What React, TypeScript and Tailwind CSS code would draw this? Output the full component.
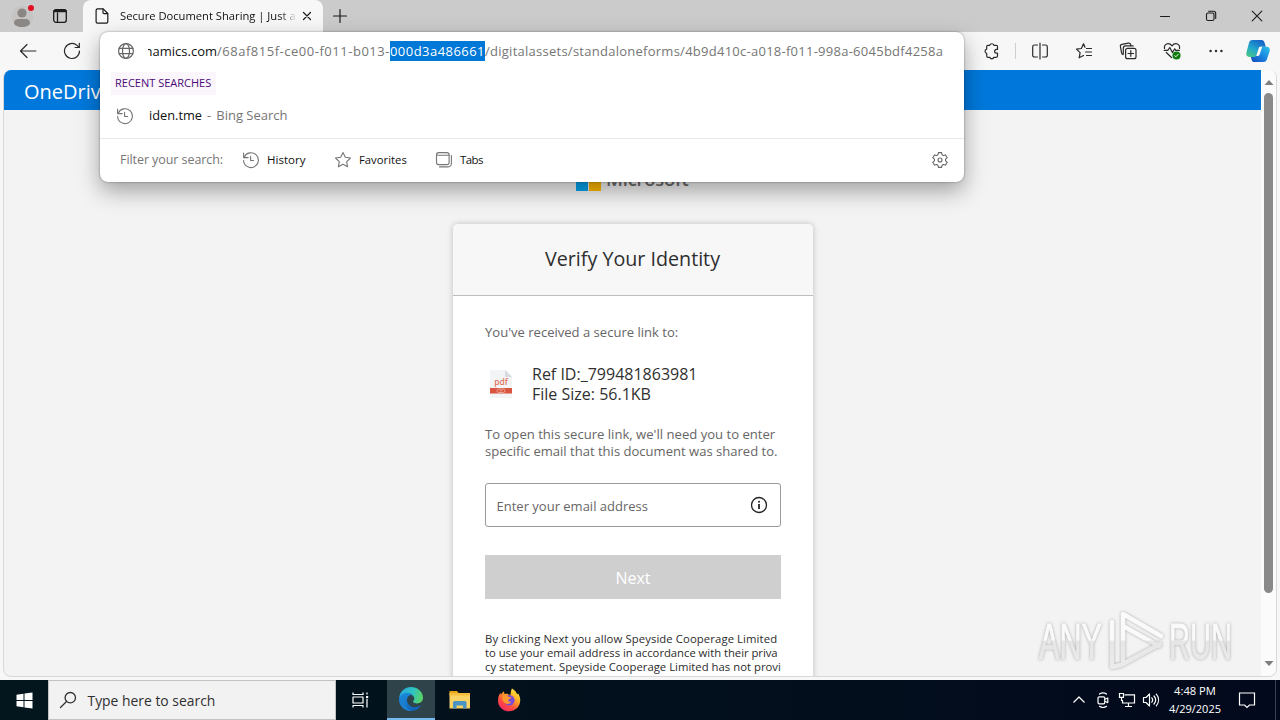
import type { ReactNode } from "react";

type IconProps = { size?: number; className?: string; children: ReactNode; sw?: number; box?: number };

function Icon({ size = 20, className = "", children, sw = 1.1, box }: IconProps) {
  const b = box ?? size;
  return (
    <svg
      width={size}
      height={size}
      viewBox={`0 0 ${b} ${b}`}
      fill="none"
      stroke="currentColor"
      strokeWidth={sw}
      strokeLinecap="round"
      strokeLinejoin="round"
      className={`shrink-0 ${className}`}
    >
      {children}
    </svg>
  );
}

const HistoryIcon = () => (
  <Icon size={18} className="text-[#767676]">
    <path d="M2.2 6.2A7.4 7.4 0 1 1 1.6 9.4" />
    <path d="M1.6 2v4.6h4.6" />
    <path d="M8.6 5.3v4.2h3" />
  </Icon>
);

function TabBar() {
  return (
    <div className="flex h-8 shrink-0 items-center bg-[#cbcbcb] text-[#1b1b1b]">
      <div className="flex w-[83px] items-center pl-[11px]">
        <svg width="24" height="24" viewBox="0 0 24 24" className="shrink-0">
          <circle cx="11.5" cy="12.5" r="11" fill="#c6c5c4" />
          <circle cx="11" cy="9" r="4.600" fill="#8b8784" />
          <path d="M3 19c0-2.600 2-4 4.200-4h7.600c2.200 0 4.200 1.400 4.200 4 0 2-3.500 4-8 4s-8-2-8-4z" fill="#8b8784" />
          <circle cx="20" cy="4" r="3" fill="#e01020" />
        </svg>
        <Icon size={16} className="ml-[17px]" sw={1.3}>
          <rect x="1.700" y="1.700" width="12.600" height="12.600" rx="2.200" />
          <path d="M2.500 3h11" strokeWidth="2.400" />
          <path d="M5.500 5v9" />
        </Icon>
      </div>
      <div className="flex h-8 w-60 items-center rounded-t-lg bg-[#f7f7f7]">
        <Icon size={18} className="ml-[10px]" sw={1.2}>
          <path d="M4.500 1.800h5.700l4.600 4.700v8.300a1.400 1.400 0 0 1-1.400 1.400H4.500a1.400 1.400 0 0 1-1.400-1.400V3.200a1.400 1.400 0 0 1 1.400-1.400z" />
          <path d="M10 2v3.600a1.100 1.100 0 0 0 1.100 1.100h3.500" />
        </Icon>
        <div className="ml-[9px] w-[177px] overflow-hidden whitespace-nowrap bg-linear-to-r from-[#111] from-90% to-[#f7f7f7] to-100% bg-clip-text text-[11.2px] leading-4 text-transparent">
          Secure Document Sharing | Just a
        </div>
        <Icon size={12} className="ml-[4px]" sw={1.2}>
          <path d="M2.500 2.500l7 7M9.500 2.500l-7 7" />
        </Icon>
      </div>
      <Icon size={16} className="ml-[9px]" sw={1.2}>
        <path d="M8 1.500v13M1.500 8h13" />
      </Icon>
      <div className="ml-auto flex items-center">
        <Icon size={12} sw={1} className="mr-[34px]">
          <path d="M1.500 6.500h9" />
        </Icon>
        <Icon size={12} sw={1.1} className="mr-[34px]">
          <rect x="1.500" y="3" width="7.500" height="7.500" rx="1.500" />
          <path d="M3.600 1.300h4.900a2.200 2.200 0 0 1 2.200 2.200v4.900" />
        </Icon>
        <Icon size={12} sw={1.1} className="mr-[17px]">
          <path d="M1.200 1.200l9.600 9.600M10.800 1.200l-9.600 9.600" />
        </Icon>
      </div>
    </div>
  );
}

function CopilotIcon() {
  return (
    <svg width="26" height="26" viewBox="0 0 26 26" className="shrink-0">
      <defs>
        <linearGradient id="cpA" x1="0" y1="1" x2="0.600" y2="0">
          <stop offset="0" stopColor="#4fc97a" />
          <stop offset="0.500" stopColor="#23a9cc" />
          <stop offset="1" stopColor="#1767c9" />
        </linearGradient>
        <linearGradient id="cpB" x1="1" y1="0" x2="0" y2="1">
          <stop offset="0" stopColor="#2bc3e8" />
          <stop offset="0.500" stopColor="#1b86e0" />
          <stop offset="1" stopColor="#1546b8" />
        </linearGradient>
      </defs>
      <path d="M18.500 24H9.300c-1.600 0-2.300-1-2.800-2.600l-1.200-4.400 5-3 4.100-4 1.800-1.200h5.500c2.400 0 3.600 1.700 3 4.200l-2.600 7.800c-.6 2.100-1.600 3.200-3.600 3.200z" fill="url(#cpB)" />
      <path d="M7.500 2h9.200c1.600 0 2.300 1 2.800 2.600l1.300 4.200h-4c-1.800 0-2.600 1-3.100 2.600l-1.400 4.500c-.6 1.900-1.600 3-3.600 3H4.400C2 18.900.8 17 1.400 14.500L3.900 5.200C4.500 3.100 5.500 2 7.500 2z" fill="url(#cpA)" />
      <path d="M13.700 10.200c.3-.9 1-1.400 1.900-1.400h1.600l-2.300 7.300c-.4 1.300-1 1.900-2.100 1.900h-1.600z" fill="#f7f7f7" />
    </svg>
  );
}

function Toolbar() {
  return (
    <div className="flex h-[38px] shrink-0 items-center bg-[#f7f7f7] text-[#2a2a2a]">
      <Icon size={18} className="ml-[19px]" sw={1.2}>
        <path d="M16.800 9H1.500M8 2.500L1.500 9 8 15.500" />
      </Icon>
      <Icon size={18} className="ml-[26px]" sw={1.2}>
        <path d="M16.500 9A7.500 7.500 0 1 1 14 3.400L16 5.200" />
        <path d="M16.300 1.300v4.200h-4.200" />
      </Icon>
      <div className="ml-auto flex items-center">
        <Icon size={18} sw={1.2}>
          <path d="M5 3.300h1.700a2.200 2.200 0 0 1 4.200 0h2.300a1.300 1.300 0 0 1 1.300 1.300v2.800h-1a1.900 1.900 0 0 0 0 3.800h1V14a1.300 1.300 0 0 1-1.300 1.300h-2.300a2.200 2.200 0 0 1-4.200 0H5A1.300 1.300 0 0 1 3.700 14v-2.500a2.300 2.300 0 0 1 0-4.400V4.600A1.300 1.300 0 0 1 5 3.300z" />
        </Icon>
        <div className="ml-[14px] h-4 w-px bg-[#cfcfcf]" />
        <Icon size={18} className="ml-[15px]" sw={1.2}>
          <path d="M6.500 3H3.500a1.800 1.800 0 0 0-1.800 1.800v8.400A1.800 1.800 0 0 0 3.500 15H6.500M11.500 3h3a1.800 1.800 0 0 1 1.800 1.800v8.400a1.800 1.800 0 0 1-1.800 1.800h-3M9 1v16" />
        </Icon>
        <Icon size={18} className="ml-[26px]" sw={1.2}>
          <path d="M10 5.300L8.500 1.800 6.400 6.500 1.500 7.100l3.600 3.500-.9 5.200 4.300-2.300M11.500 6.500h5M10.500 10h6M11.500 13.500h5" />
        </Icon>
        <Icon size={18} className="ml-[26px]" sw={1.2}>
          <rect x="6.600" y="6.300" width="10.400" height="10.400" rx="2" />
          <path d="M11.800 8.700v5.600M9 11.500h5.600M4 12.600a2 2 0 0 1-1.400-1.800L1.400 4.600a2 2 0 0 1 1.500-2.300l6.500-1.200a2 2 0 0 1 2.300 1.500l.2 1.200M4.300 12V6.200a2.300 2.300 0 0 1 2.300-2.300h7.500" />
        </Icon>
        <Icon size={18} className="ml-[26px]" sw={1.2}>
          <path d="M1.500 6.500C.8 3.800 2.800 1.700 5.200 1.700c1.600 0 2.900 1 3.800 2.100.9-1.100 2.200-2.100 3.800-2.100 2.400 0 4.400 2.100 3.700 4.800M3.300 10.500L8.500 15.500M1.200 8.300h3.600l2-2.800 2.600 5 2.300-3.700 1 1.500h3.800" />
          <circle cx="13.500" cy="13.500" r="4.100" fill="#107c10" stroke="none" />
          <path d="M11.700 13.700l1.200 1.100 2.300-2.500" stroke="#fff" strokeWidth="0.900" />
        </Icon>
        <Icon size={18} className="ml-[26px]" sw={0}>
          <g fill="currentColor">
            <circle cx="3.600" cy="9" r="1.200" />
            <circle cx="9" cy="9" r="1.200" />
            <circle cx="14.400" cy="9" r="1.200" />
          </g>
        </Icon>
        <div className="ml-5 mr-[9px]">
          <CopilotIcon />
        </div>
      </div>
    </div>
  );
}

function PdfIcon() {
  return (
    <svg width="24" height="30" viewBox="0 0 24 30" className="shrink-0">
      <path d="M1 1h16l6 6v22H1z" fill="#f3f4f6" />
      <path d="M16 1l7 7h-7z" fill="#d8dce2" />
      <text x="12" y="15.500" textAnchor="middle" fontSize="8.500" fontFamily="Open Sans, sans-serif" fontWeight="600" fill="#e2735f">pdf</text>
      <rect x="1" y="19" width="22" height="5.500" fill="#d9553f" />
      <rect x="8" y="20" width="8" height="3.500" rx="1.700" fill="none" stroke="#f0b6ab" strokeWidth="0.800" />
      <path d="M10.500 21.800h3" stroke="#f0b6ab" strokeWidth="0.800" />
    </svg>
  );
}

function VerifyCard() {
  return (
    <div className="mt-[33px] w-[360px] shrink-0 rounded-t-[5px] bg-white shadow-[0_0_6px_rgba(0,0,0,0.22)]">
      <div className="flex h-[72px] items-center justify-center rounded-t-[5px] border-b border-[#bdbdbd] bg-[#f7f7f7] pb-[2px] text-[19.7px] text-[#2e2e2e]">
        Verify Your Identity
      </div>
      <div className="pl-[32.5px] pr-8 pt-[27px] text-[#666]">
        <p className="text-[13.05px] leading-[18px]">You've received a secure link to:</p>
        <div className="mt-[23px] flex items-center pl-[3.5px] text-base leading-5 text-[#303030]">
          <PdfIcon />
          <div className="ml-[19.5px] whitespace-nowrap">
            <p>Ref ID:_799481863981</p>
            <p>File Size: 56.1KB</p>
          </div>
        </div>
        <div className="mt-[22px] whitespace-nowrap leading-[17px]">
          <p className="text-[13.1px]">To open this secure link, we'll need you to enter</p>
          <p className="text-[13.05px]">specific email that this document was shared to.</p>
        </div>
        <div className="-ml-[0.5px] mt-[23px] flex h-11 items-center justify-between rounded-[3px] border border-[#9a9a9a] pl-[11px] pr-3 text-[13px]">
          <span className="pt-[3px]">Enter your email address</span>
          <Icon size={18} sw={1.3} className="text-[#222]">
            <circle cx="9" cy="9" r="7.500" />
            <path d="M9 8v5" strokeWidth="1.800" strokeLinecap="butt" />
            <circle cx="9" cy="5.800" r="1" fill="currentColor" stroke="none" />
          </Icon>
        </div>
        <div className="-ml-[0.5px] mt-7 flex h-11 items-center justify-center bg-[#cfcfcf] pl-px pt-px text-base text-white">Next</div>
        <div className="mt-[33px] whitespace-nowrap pb-8 text-[11.3px] leading-[14px] text-[#2b2b2b]">
          <p className="tracking-[0.1px]">By clicking Next you allow Speyside Cooperage Limited</p>
          <p className="tracking-[-0.03px]">to use your email address in accordance with their priva</p>
          <p className="tracking-[0.02px]">cy statement. Speyside Cooperage Limited has not provi</p>
        </div>
      </div>
    </div>
  );
}

function Watermark() {
  return (
    <svg width="204" height="68" viewBox="0 0 204 68" className="absolute left-[1035px] top-[606px] drop-shadow-[0_0_1.5px_rgba(0,0,0,0.3)]">
      <defs>
        <linearGradient id="wm" x1="0" y1="0" x2="0" y2="68" gradientUnits="userSpaceOnUse">
          <stop offset="0.500" stopColor="#fafafa" />
          <stop offset="0.520" stopColor="#e6e6e6" />
          <stop offset="1" stopColor="#ececec" />
        </linearGradient>
      </defs>
      <g fill="url(#wm)" fontFamily="Liberation Sans Narrow, Liberation Sans, sans-serif" fontSize="50" stroke="url(#wm)" strokeWidth="0.800">
        <text x="4" y="53" textLength="63" lengthAdjust="spacingAndGlyphs">ANY</text>
        <text x="134" y="53" textLength="63" lengthAdjust="spacingAndGlyphs">RUN</text>
      </g>
      <g fill="none" stroke="url(#wm)" strokeWidth="4.500" strokeLinejoin="round" strokeLinecap="round">
        <path d="M88 45V8L126 30M88 20L124 40" />
        <path d="M77 16v45l9-2L125 38M88 45v10" />
      </g>
    </svg>
  );
}

function Page() {
  return (
    <div className="flex h-[610px] shrink-0 bg-[#f7f7f7] px-[3px]">
      <div className="flex h-[607px] w-full overflow-hidden rounded-lg border border-[#d9d9d9] border-t-0 bg-[#f3f3f3]">
        <div className="flex w-[1257px] flex-col items-center">
          <div className="flex h-10 w-full shrink-0 items-center bg-[#0078db] pb-0 pl-5 pt-[3px] text-[20px] text-white">OneDrive</div>
          <div className="mt-14 flex shrink-0 items-center self-start pl-[572px]">
            <div className="grid grid-cols-2 gap-px">
              <div className="size-3 bg-[#f25022]" />
              <div className="size-3 bg-[#7fba00]" />
              <div className="size-3 bg-[#00a4ef]" />
              <div className="size-3 bg-[#ffb900]" />
            </div>
            <div className="ml-[5px] h-[25px] text-[18.3px] font-semibold leading-[25px] tracking-[-0.15px] text-[#6b6b6b]">Microsoft</div>
          </div>
          <VerifyCard />
        </div>
        <div className="flex grow flex-col items-center bg-[#fbfbfb] pb-[9px] pt-[9px] text-[#7e7e7e]">
          <svg width="10" height="7" viewBox="0 0 10 7"><path d="M0.500 6L5 1l4.500 5z" fill="currentColor" /></svg>
          <div className="mt-[7px] h-[500px] w-[9px] rounded-full bg-[#8a8a8a]" />
          <svg width="10" height="7" viewBox="0 0 10 7" className="mt-auto"><path d="M0.500 1L5 6l4.500-5z" fill="currentColor" /></svg>
        </div>
      </div>
    </div>
  );
}

function AddressDropdown() {
  return (
    <div className="absolute left-[99.5px] top-[31.5px] flex h-[150.5px] w-[864px] flex-col rounded-lg bg-white text-[13px] text-[#767676] shadow-[0_0_2px_rgba(0,0,0,0.45),0_9px_22px_rgba(0,0,0,0.34)]">
      <div className="flex h-[38px] items-center whitespace-nowrap pl-[17.5px]">
        <Icon size={18} sw={1.2} className="text-[#666]">
          <circle cx="9" cy="9" r="7.400" />
          <ellipse cx="9" cy="9" rx="3.500" ry="7.400" />
          <path d="M2.200 6.300h13.600M2.200 11.700h13.600" />
        </Icon>
        <div className="ml-[13px] flex w-[69px] justify-end overflow-hidden leading-5 text-[#111]">
          <span>namics.com</span>
        </div>
        <span className="leading-5 tracking-[0.52px]">/68af815f-ce00-f011-b013-</span>
        <span className="bg-[#0078d7] leading-5 tracking-[0.46px] text-white">000d3a486661</span>
        <span className="leading-5 tracking-[0.26px]">/digitalassets/standaloneforms/4b9d410c-a018-f011-998a-6045bdf4258a</span>
      </div>
      <div className="ml-[11.5px] mt-[2.5px] flex h-[23px] w-[105px] items-center bg-[#faf6fb] pl-1 text-[11px] text-[#4b0a77]">
        RECENT SEARCHES
      </div>
      <div className="flex h-10 items-center whitespace-nowrap pl-[16.5px] pt-px">
        <HistoryIcon />
        <span className="ml-[15px] text-[12.8px] text-[#111]">iden.tme</span>
        <span className="ml-[5px]">-</span>
        <span className="ml-[5px]">Bing Search</span>
      </div>
      <div className="mt-[3px] h-px shrink-0 bg-[#e8e8e8]" />
      <div className="flex h-[42px] items-center whitespace-nowrap pl-[20.5px] pr-[15px]">
        <span className="w-[122px] pt-px text-[12.5px] tracking-[-0.07px]">Filter your search:</span>
        <HistoryIcon />
        <span className="ml-[7px] w-[67px] text-[11.5px] tracking-[0.02px] text-[#111]">History</span>
        <Icon size={18} className="text-[#767676]">
          <path d="M9 1.600l2.300 4.700 5.200.7-3.800 3.600.9 5.200L9 13.300l-4.600 2.500.9-5.200L1.500 7l5.200-.7z" />
        </Icon>
        <span className="ml-[7px] w-[76px] text-[11.3px] text-[#111]">Favorites</span>
        <Icon size={18} className="text-[#767676]">
          <rect x="1.500" y="1.600" width="12.600" height="12" rx="2.200" />
          <path d="M1.600 4.300h12.400M4.500 15.900h8.200a3.700 3.700 0 0 0 3.700-3.700V4.500" />
        </Icon>
        <span className="ml-[7px] text-[11.4px] tracking-[-0.5px] text-[#111]">Tabs</span>
        <Icon size={18} className="ml-auto text-[#666]">
          <path d="M7.400 1.600h3.200l.5 2.200 1.300.8 2.200-.7 1.600 2.800-1.600 1.500v1.600l1.600 1.500-1.600 2.800-2.200-.7-1.300.8-.5 2.200H7.400l-.5-2.200-1.300-.8-2.200.7-1.600-2.800 1.600-1.500V8.200L1.800 6.700l1.600-2.800 2.200.7 1.300-.8z" />
          <circle cx="9" cy="9" r="2" />
        </Icon>
      </div>
    </div>
  );
}

function EdgeLogo() {
  return (
    <svg width="26" height="26" viewBox="0 0 26 26">
      <defs>
        <linearGradient id="eg1" x1="0" y1="0.300" x2="1" y2="0.500">
          <stop offset="0" stopColor="#2aa7e0" />
          <stop offset="0.550" stopColor="#2fc3c0" />
          <stop offset="1" stopColor="#5bd363" />
        </linearGradient>
        <linearGradient id="eg2" x1="0" y1="0" x2="0.400" y2="1">
          <stop offset="0" stopColor="#1b8fdc" />
          <stop offset="1" stopColor="#1265bd" />
        </linearGradient>
      </defs>
      <path d="M1.200 11.500C2 5.500 7 1 13 1c6.500 0 12 4.800 12 10.800 0 3.400-2.600 5.700-6 5.700-2.400 0-4-.8-4-1.900 0-.8 1.300-1.200 1.300-3 0-2.400-2.300-4.400-5.500-4.400-4 0-7.800 1.500-9.600 3.300z" fill="url(#eg1)" />
      <path d="M1 13c.3-3.700 4-6.200 8-6.200 2.300 0 4.300.7 5.500 1.900-3.300-.2-5.500 2.200-5.500 5.300 0 5 5 8.600 10.500 6.800 1.300-.4 2.600-1 3.500-1.500C21 23 17.400 25 13.300 25 6.500 25 .6 19.800 1 13z" fill="url(#eg2)" />
      <path d="M10.800 9.600C8.600 10.400 7 12.600 7 15.500c0 4.200 2.600 8 6.500 9.500C7 25.200 2.700 21 1.700 16 3 11.600 6.500 9 10.800 9.600z" fill="#1d7fd0" />
    </svg>
  );
}

function FolderIcon() {
  return (
    <svg width="22" height="20" viewBox="0 0 22 20">
      <path d="M0.500 1h7.500l2 2.500H0.500z" fill="#e8a317" />
      <path d="M0.500 3h20.500v15.500H0.500z" fill="#fbd365" />
      <path d="M0.500 3h20.500v2.500H0.500z" fill="#f4bd3e" />
      <path d="M4 18.500v-6A1.500 1.500 0 0 1 5.500 11h10.500a1.500 1.500 0 0 1 1.500 1.500v6h-3.500v-3h-6.500v3z" fill="#4a94c4" />
    </svg>
  );
}

function FirefoxLogo() {
  return (
    <svg width="24" height="24" viewBox="0 0 24 24">
      <defs>
        <linearGradient id="ff" x1="0.850" y1="0" x2="0.200" y2="1">
          <stop offset="0" stopColor="#fff04a" />
          <stop offset="0.350" stopColor="#ffae26" />
          <stop offset="0.700" stopColor="#ff4a3f" />
          <stop offset="1" stopColor="#f0256e" />
        </linearGradient>
      </defs>
      <path d="M15 0.500c3.200 2 4.700 4.300 5.300 6l.8-1.200C22.700 8 23.400 10.300 23.200 13 22.700 19 18 23.300 12 23.300S1 18.700 1 12.700C1 9.500 1.800 7 3.500 4.800l.4 2c.8-1.600 2-2.800 3.100-3.600l.3 2.800c2.300-.7 4.700.2 6 1.500.6-2.500.4-5 1.700-7z" fill="url(#ff)" />
      <circle cx="12.300" cy="12.300" r="5.300" fill="#7a4bd8" />
      <path d="M5.500 8c2-1 4.500-.6 6 .8l3 .6c-.3 1.300-2.500 1.400-3.200 2.600-.4 1.300 1 2.300 3 1.600-1 2.500-4.500 3.300-6.500 1.500C5.500 13 5 10 5.500 8z" fill="#ff9a2c" />
    </svg>
  );
}

function Taskbar() {
  return (
    <div className="flex h-10 shrink-0 items-center bg-linear-to-r from-[#03161d] to-[#02091c] text-white">
      <div className="flex w-12 items-center justify-center">
        <svg width="17" height="17" viewBox="0 0 17 17" fill="#fff">
          <path d="M0.500 2.700L7.500 1.700V8H0.500zM8.500 1.500L16.500 0.400V8H8.500zM0.500 9H7.500v6.300L0.500 14.300zM8.500 9H16.500v7.600L8.500 15.500z" />
        </svg>
      </div>
      <div className="flex h-10 w-72 items-center border border-[#c2c2c2] bg-[#f2f2f2] text-[13.9px] text-[#303030]">
        <Icon size={18} className="ml-[10px]" sw={1.3}>
          <circle cx="11.300" cy="6.700" r="5.200" />
          <path d="M7.500 10.500L1.500 16.500" />
        </Icon>
        <span className="ml-[10.5px] pt-0.5">Type here to search</span>
      </div>
      <div className="flex w-[51px] items-center justify-center">
        <Icon size={18} sw={1.2} className="mr-1">
          <path d="M2 1.500v2h10v-2M2 16.500v-2h10v2M2 6h10v6H2zM16 1.500v2M16 8v8.500" strokeLinecap="butt" />
          <rect x="15" y="5" width="2.200" height="2.200" fill="#fff" stroke="none" />
        </Icon>
      </div>
      <div className="flex h-10 w-12 items-center justify-center border-b-2 border-[#76b9ed] bg-[#2f444a]">
        <EdgeLogo />
      </div>
      <div className="flex w-[49px] items-center justify-center"><FolderIcon /></div>
      <div className="flex w-[49px] items-center justify-center"><FirefoxLogo /></div>
      <div className="ml-auto flex items-center">
        <Icon size={14} sw={1.2}>
          <path d="M1.500 9.500L7 4l5.500 5.500" strokeLinecap="butt" />
        </Icon>
        <Icon size={16} className="ml-[9px]" sw={1.2}>
          <rect x="3" y="4.800" width="6.800" height="7" rx="1.300" />
          <path d="M9.800 7.300l3-1.300v4.600l-3-1.300M4.500 2.100C6.500.7 9.500.7 11.500 2.100M4.500 14.300c2 1.400 5 1.400 7 0" />
        </Icon>
        <Icon size={18} className="ml-[7px]" sw={1.2}>
          <path d="M6.500 3.800h10v8.200H4.500V9M10.500 12v3.200M7 15.500h7M1.500 2.500h4v3.800h-4zM3.500 6.300v3h1" strokeLinecap="butt" strokeLinejoin="miter" />
        </Icon>
        <Icon size={18} className="ml-[6px]" sw={1.2}>
          <path d="M1.500 6.500H4L7.500 3v12L4 11.500H1.500zM9.800 6.800c1 1.300 1 3.100 0 4.400M12 5c2 2.400 2 5.600 0 8M14.300 3.200c3 3.500 3 8.100 0 11.600" />
        </Icon>
        <div className="ml-[5px] flex w-[60px] flex-col items-center text-[11.2px] leading-[18px]">
          <span>4:48 PM</span>
          <span className="text-[11px] tracking-[-0.03px]">4/29/2025</span>
        </div>
        <Icon size={18} className="ml-[13px]" sw={1.2}>
          <path d="M1.500 2h15v12h-5L9 16.500 6.500 14h-5z" strokeLinejoin="miter" />
        </Icon>
        <div className="ml-[19px] mr-1 h-10 w-px bg-[#3b4250]" />
      </div>
    </div>
  );
}

export default function App() {
  return (
    <div className="relative flex h-[720px] w-[1280px] flex-col overflow-hidden font-['Open_Sans','Noto_Sans',sans-serif]">
      <TabBar />
      <Toolbar />
      <Page />
      <Taskbar />
      <AddressDropdown />
      <Watermark />
    </div>
  );
}
